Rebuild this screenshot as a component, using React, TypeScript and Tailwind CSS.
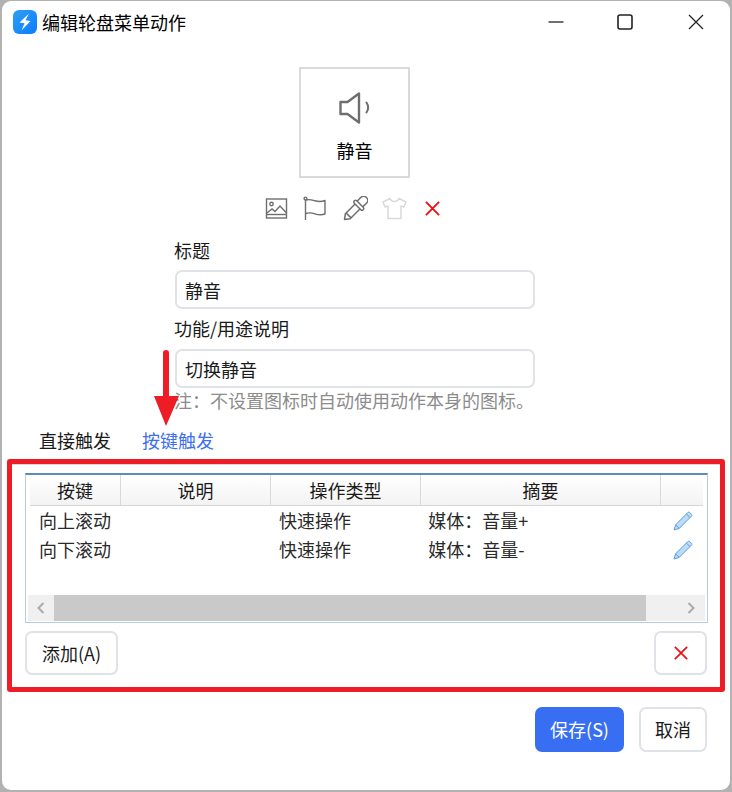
import React from 'react';

const FONT = "font-['Noto_Sans_CJK_SC','Microsoft_YaHei',sans-serif]";

const columns = [
  { label: '按键', width: 'w-[91px]' },
  { label: '说明', width: 'w-[150px]' },
  { label: '操作类型', width: 'w-[150px]' },
  { label: '摘要', width: 'w-[240px]' },
  { label: '', width: 'w-[45px]' },
];

const rows = [
  { key: '向上滚动', type: '快速操作', summary: '媒体：音量+' },
  { key: '向下滚动', type: '快速操作', summary: '媒体：音量-' },
];

const Logo = () => (
  <svg width="24" height="24" viewBox="0 0 24 24">
    <defs>
      <linearGradient id="logo" x1="0" y1="0" x2="1" y2="1">
        <stop offset="0" stopColor="#2f9ff7" />
        <stop offset="1" stopColor="#0a7dfb" />
      </linearGradient>
    </defs>
    <rect width="24" height="24" rx="6" fill="url(#logo)" />
    <path d="M16 3.500 6.500 12.500l5 .8L8.500 20.500l9-9.500-5-.8z" fill="#fff" />
  </svg>
);

const Pencil = () => (
  <svg width="20" height="20" viewBox="0 0 20 20" fill="none">
    <path d="M1 19l1.600-5.200L14.800 1.600c.6-.6 1.400-.6 2 0l1.600 1.600c.6.6.6 1.400 0 2L6.200 17.400 1 19z" fill="#bcdcf8" stroke="#5b9fe2" strokeWidth="1" strokeLinejoin="round" />
    <path d="M2.600 13.800l3.600 3.600M13.400 3l3.600 3.600" stroke="#5b9fe2" strokeWidth="1" />
  </svg>
);

const Chevron = ({ right }: { right?: boolean }) => (
  <svg width="8" height="12" viewBox="0 0 8 12" fill="none" stroke="#ababab" strokeWidth="2">
    <path d={right ? 'M1.500 1l5 5-5 5' : 'M6.500 1l-5 5 5 5'} />
  </svg>
);

const RedX = ({ size }: { size: number }) => (
  <svg width={size} height={size} viewBox="0 0 16 16" stroke="#f01010" strokeWidth="2" fill="none">
    <path d="M1 1l14 14M15 1L1 15" />
  </svg>
);

export default function App() {
  return (
    <div className={`relative w-[732px] h-[792px] overflow-hidden bg-[#b2b2b2] pt-px pl-[2px] pr-[2px] pb-[2px] ${FONT}`}>
      <div className="flex flex-col h-full bg-white rounded-[9px] text-[#1a1a1a]">
        {/* title bar */}
        <div className="flex items-center h-[43px] pl-[11px] pb-px shrink-0">
          <Logo />
          <span className="ml-[5px] text-[18px] leading-[24px] text-black">编辑轮盘菜单动作</span>
          <div className="ml-auto flex items-center">
            <svg className="mr-[53px]" width="16" height="16" viewBox="0 0 16 16" stroke="#222" strokeWidth="1.300" fill="none">
              <path d="M0.500 8h15" />
            </svg>
            <svg className="mr-[55px]" width="16" height="16" viewBox="0 0 16 16" stroke="#222" strokeWidth="1.600" fill="none">
              <rect x="1" y="1" width="14" height="14" rx="2" />
            </svg>
            <svg className="mr-[26px]" width="16" height="16" viewBox="0 0 16 16" stroke="#222" strokeWidth="1.300" fill="none">
              <path d="M1 1l14 14M15 1L1 15" />
            </svg>
          </div>
        </div>

        {/* icon preview */}
        <div className="self-start mt-[23px] ml-[297px] w-[111px] h-[111px] shrink-0 border-2 border-[#dadada] flex flex-col items-center">
          <svg className="mt-[23px]" width="32" height="32" viewBox="0 0 32 32" fill="none" stroke="#6e6e6e" strokeWidth="2.400" strokeLinejoin="round" strokeLinecap="round">
            <path d="M1.500 10h7L20 1.500v29L8.500 22h-7z" />
            <path d="M27.500 10.500c2 3 2 7 0 10" strokeWidth="2" />
          </svg>
          <span className="mt-[14px] text-[18px] leading-[24px] text-black">静音</span>
        </div>

        {/* icon tools */}
        <div className="flex items-center self-start h-[26px] mt-[17px] ml-[263px] gap-[15px] shrink-0">
          <svg width="23" height="23" viewBox="0 0 23 23" fill="none" stroke="#6e6e6e" strokeWidth="1.400">
            <rect x="1.500" y="2" width="20" height="19" />
            <circle cx="6.500" cy="7" r="1.700" />
            <path d="M2 16l5-4 3 2.500 5-5.500 6.500 7" />
            <path d="M2 17.500h19" />
          </svg>
          <svg width="25" height="25" viewBox="0 0 25 25" fill="none" stroke="#6e6e6e" strokeWidth="1.400" strokeLinejoin="round">
            <circle cx="2.500" cy="2.500" r="1.400" />
            <path d="M2.500 4v20" />
            <path d="M3 4c3.500-1.200 6 0 9 .8 3.500 1 6.500 1 10-.3v13.500c-3.500 1.200-6.500 1-10-.2-3-1-5.500-1.500-9-.3" />
          </svg>
          <svg width="25" height="25" viewBox="0 0 25 25" fill="none" stroke="#6e6e6e" strokeWidth="1.300" strokeLinejoin="round">
            <g transform="translate(12.500 12.500) rotate(45) scale(1.150) translate(-12.500 -12)">
              <path d="M9 6.500V2a3.500 3.500 0 0 1 7 0v4.500" />
              <rect x="7" y="6.500" width="11" height="3" rx="1.500" />
              <path d="M9.500 9.500v12l3 4 3-4v-12" />
              <path d="M9.500 20.500h6" />
            </g>
          </svg>
          <svg className="-ml-px" width="25" height="23" viewBox="0 0 25 23" fill="none" stroke="#d9d9d9" strokeWidth="1.500" strokeLinejoin="round">
            <path d="M8 1.500L1 5l2 5 3-1v12.500h13V9l3 1 2-5-7-3.500c-1 2.500-3 3-4.500 3S9 4 8 1.500z" />
          </svg>
          <span className="ml-[3px]"><RedX size={15} /></span>
        </div>

        {/* form */}
        <div className="flex flex-col ml-[173px] w-[360px] shrink-0">
          <label className="-ml-px mt-[17px] text-[18px] leading-[24px]">标题</label>
          <input readOnly value="静音" className="mt-[8px] h-[39px] w-full rounded-[7px] border-2 border-[#dfe2e6] px-[8px] text-[18px] text-[#1a1a1a] outline-none" />
          <label className="-ml-px mt-[7px] text-[18px] leading-[24px]">功能/用途说明</label>
          <input readOnly value="切换静音" className="mt-[9px] h-[39px] w-full rounded-[7px] border-2 border-[#dfe2e6] px-[8px] text-[18px] text-[#1a1a1a] outline-none" />
          <p className="-ml-px text-[18px] leading-[24px] text-[#8c8c8c] whitespace-nowrap">注：不设置图标时自动使用动作本身的图标。</p>
        </div>

        {/* tabs */}
        <div className="flex items-start h-[38px] mt-[15px] ml-[7px] mr-[9px] border-b border-[#d8d8d8] text-[18px] leading-[24px] shrink-0">
          <div className="w-[118px] h-full pl-[30px] pt-px">直接触发</div>
          <div className="w-[102px] h-[37px] pl-[15px] pt-px text-[#3d6ff0] border-b-2 border-[#3d6ff0]">按键触发</div>
        </div>

        {/* key table */}
        <div className="flex flex-col mt-[8px] ml-[23px] mr-[22px] h-[150px] shrink-0 border border-[#b4cde0] border-t-2 border-t-[#5c8eb5] bg-white px-[4px] pb-[1px]">
          <div className="flex h-[31px] shrink-0 border-b border-[#d5d5d5] bg-gradient-to-b from-white to-[#f3f3f3] text-[18px]">
            {columns.map(col => (
              <div key={col.label || 'edit'} className={`${col.width} flex items-center justify-center border-r border-[#d9d9d9] last:border-r-0 shrink-0`}>
                {col.label}
              </div>
            ))}
          </div>
          <div className="flex-1">
            {rows.map(row => (
              <div key={row.key} className="flex items-center h-[29px] text-[18px] text-[#2a2a2a]">
                <div className="w-[241px] pl-[9px]">{row.key}</div>
                <div className="w-[150px] pl-[9px]">{row.type}</div>
                <div className="w-[243px] pl-[9px]">{row.summary}</div>
                <div className="w-[42px] pl-[12px]"><Pencil /></div>
              </div>
            ))}
          </div>
          <div className="flex items-stretch h-[26px] shrink-0 -mx-[2px] bg-[#f0f0f0]">
            <div className="w-[26px] flex items-center justify-center"><Chevron /></div>
            <div className="w-[592px] bg-[#c9c9c9]" />
            <div className="flex-1 flex items-center justify-end pr-[10px]"><Chevron right /></div>
          </div>
        </div>

        {/* table buttons */}
        <div className="flex justify-between mt-[8px] ml-[23px] mr-[23px] shrink-0">
          <button className="w-[93px] h-[44px] rounded-[7px] border-2 border-[#dfe2e6] bg-white text-[18px]">添加(A)</button>
          <button className="w-[53px] h-[44px] rounded-[7px] border-2 border-[#dfe2e6] bg-white flex items-center justify-center"><RedX size={14} /></button>
        </div>

        {/* footer */}
        <div className="flex justify-end mt-[32px] mr-[23px] gap-[15px] shrink-0">
          <button className="w-[89px] h-[45px] rounded-[7px] bg-[#386ff2] text-white text-[18px]">保存(S)</button>
          <button className="w-[68px] h-[45px] rounded-[7px] border-2 border-[#dfe2e6] bg-white text-[18px]">取消</button>
        </div>
      </div>

      {/* red annotation */}
      <div className="absolute left-[7px] top-[459px] w-[718px] h-[233px] rounded-[3px] border-[5px] border-[#ee1c25]" />
      <svg className="absolute left-[153px] top-[350px]" width="26" height="76" viewBox="0 0 26 76" fill="#ee1c25">
        <path d="M10 3a3 3 0 0 1 6 0v43h10L13 76 1 46h9z" />
      </svg>
    </div>
  );
}
